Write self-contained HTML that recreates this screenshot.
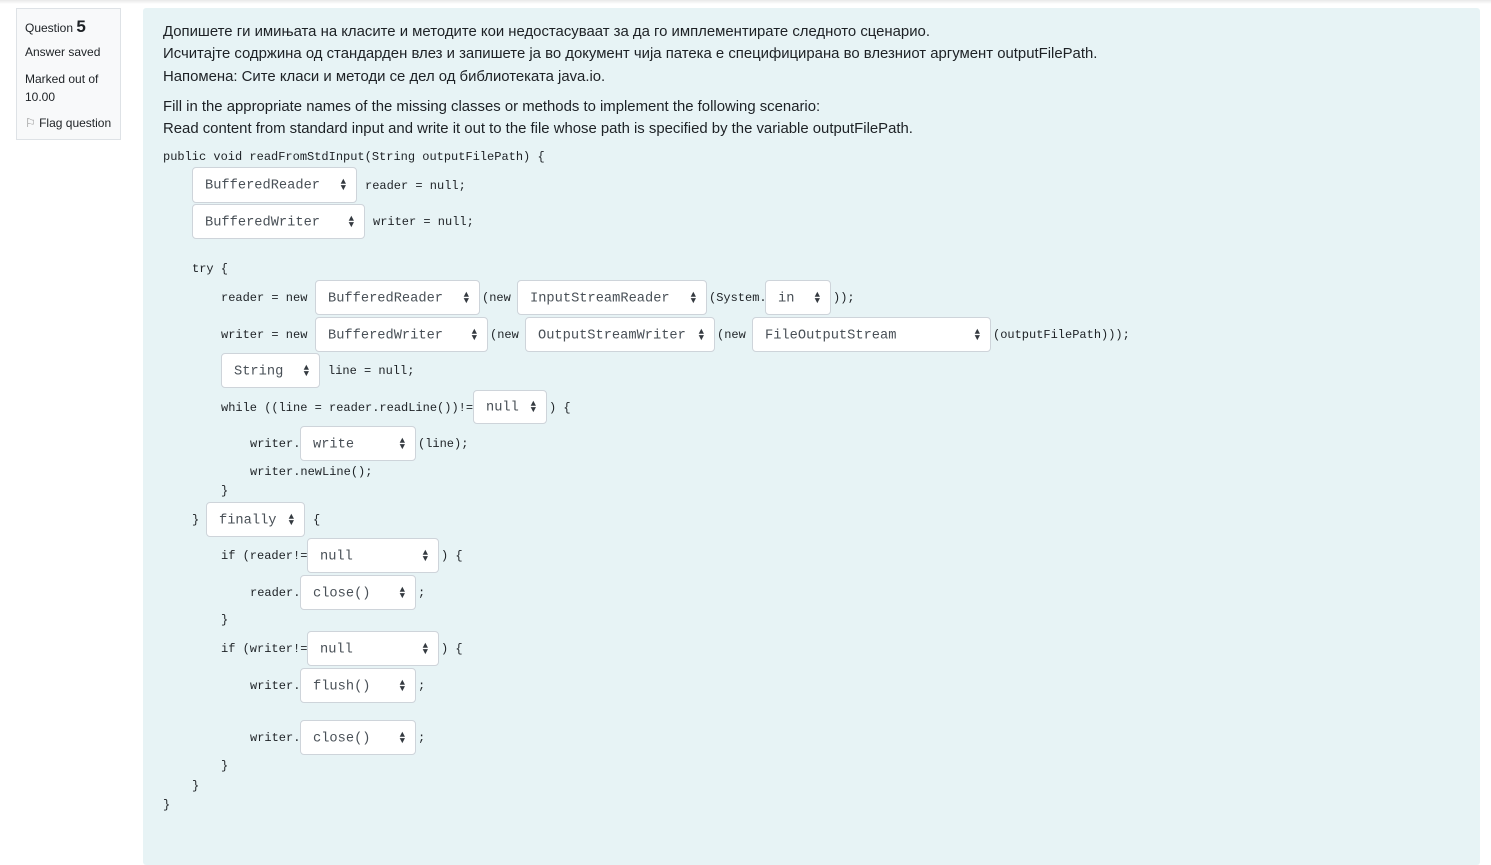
<!DOCTYPE html>
<html><head><meta charset="utf-8"><style>
body{margin:0;width:1491px;height:865px;background:#fff;position:relative;overflow:hidden;font-family:"Liberation Sans",sans-serif;color:#1d2125}
.top{position:absolute;left:0;top:0;width:1491px;height:4px;background:linear-gradient(#e8e8e8,#fff)}
.side{position:absolute;left:16px;top:8px;width:103px;height:130px;background:#f8f9fa;border:1px solid #dee2e6;font-size:12px;color:#1d2125}
.side div{position:absolute;left:8px;white-space:nowrap}
.panel{position:absolute;left:143px;top:8px;width:1337px;height:857px;background:#e7f3f5;border-radius:3px}
.t{position:absolute;left:163px;font-size:14.9px;white-space:nowrap;line-height:18px}
.c{position:absolute;font-family:"Liberation Mono",monospace;font-size:12px;white-space:nowrap;line-height:14px;color:#1d2125}
.s{position:absolute;background:#fff;border:1px solid #ced4da;border-radius:4px;box-sizing:border-box;font-family:"Liberation Mono",monospace;font-size:13.7px;color:#495057}
.s span{position:absolute;left:12px;top:50%;transform:translateY(-45%)}
.s i{position:absolute;right:10px;top:50%;transform:translateY(-50%);font-style:normal;font-size:9px;line-height:6px;color:#343a40;text-align:center}
</style></head><body>
<div class="top"></div>
<div class="side">
<div style="top:8px">Question <b style="font-size:17px">5</b></div>
<div style="top:36px">Answer saved</div>
<div style="top:63px">Marked out of</div>
<div style="top:81px">10.00</div>
<div style="top:107px"><span style="color:#888">⚐</span> Flag question</div>
</div>
<div class="panel"></div>
<div class="t" style="top:23px">Допишете ги имињата на класите и методите кои недостасуваат за да го имплементирате следното сценарио.</div>
<div class="t" style="top:45px">Исчитајте содржина од стандарден влез и запишете ја во документ чија патека е специфицирана во влезниот аргумент outputFilePath.</div>
<div class="t" style="top:68px">Напомена: Сите класи и методи се дел од библиотеката java.io.</div>
<div class="t" style="top:98px">Fill in the appropriate names of the missing classes or methods to implement the following scenario:</div>
<div class="t" style="top:120px">Read content from standard input and write it out to the file whose path is specified by the variable outputFilePath.</div>

<div class="c" style="left:163px;top:150px">public void readFromStdInput(String outputFilePath) {</div>

<div class="s" style="left:192px;top:167px;width:165px;height:36px"><span>BufferedReader</span><i>▲<br>▼</i></div>
<div class="c" style="left:365px;top:179px">reader = null;</div>
<div class="s" style="left:192px;top:204px;width:173px;height:35px"><span>BufferedWriter</span><i>▲<br>▼</i></div>
<div class="c" style="left:373px;top:215px">writer = null;</div>

<div class="c" style="left:192px;top:262px">try {</div>
<div class="c" style="left:221px;top:291px">reader = new</div>
<div class="s" style="left:315px;top:280px;width:165px;height:35px"><span>BufferedReader</span><i>▲<br>▼</i></div>
<div class="c" style="left:482px;top:291px">(new</div>
<div class="s" style="left:517px;top:280px;width:190px;height:35px"><span>InputStreamReader</span><i>▲<br>▼</i></div>
<div class="c" style="left:709px;top:291px">(System.</div>
<div class="s" style="left:765px;top:280px;width:66px;height:35px"><span>in</span><i>▲<br>▼</i></div>
<div class="c" style="left:833px;top:291px">));</div>

<div class="c" style="left:221px;top:328px">writer = new</div>
<div class="s" style="left:315px;top:317px;width:173px;height:35px"><span>BufferedWriter</span><i>▲<br>▼</i></div>
<div class="c" style="left:490px;top:328px">(new</div>
<div class="s" style="left:525px;top:317px;width:190px;height:35px"><span>OutputStreamWriter</span><i>▲<br>▼</i></div>
<div class="c" style="left:717px;top:328px">(new</div>
<div class="s" style="left:752px;top:317px;width:239px;height:35px"><span>FileOutputStream</span><i>▲<br>▼</i></div>
<div class="c" style="left:993px;top:328px">(outputFilePath)));</div>

<div class="s" style="left:221px;top:353px;width:99px;height:35px"><span>String</span><i>▲<br>▼</i></div>
<div class="c" style="left:328px;top:364px">line = null;</div>

<div class="c" style="left:221px;top:401px">while ((line = reader.readLine())!=</div>
<div class="s" style="left:473px;top:390px;width:74px;height:34px"><span>null</span><i>▲<br>▼</i></div>
<div class="c" style="left:549px;top:401px">) {</div>

<div class="c" style="left:250px;top:437px">writer.</div>
<div class="s" style="left:300px;top:426px;width:116px;height:35px"><span>write</span><i>▲<br>▼</i></div>
<div class="c" style="left:418px;top:437px">(line);</div>
<div class="c" style="left:250px;top:465px">writer.newLine();</div>
<div class="c" style="left:221px;top:484px">}</div>

<div class="c" style="left:192px;top:513px">}</div>
<div class="s" style="left:206px;top:502px;width:99px;height:35px"><span>finally</span><i>▲<br>▼</i></div>
<div class="c" style="left:313px;top:513px">{</div>

<div class="c" style="left:221px;top:549px">if (reader!=</div>
<div class="s" style="left:307px;top:538px;width:132px;height:35px"><span>null</span><i>▲<br>▼</i></div>
<div class="c" style="left:441px;top:549px">) {</div>
<div class="c" style="left:250px;top:586px">reader.</div>
<div class="s" style="left:300px;top:575px;width:116px;height:35px"><span>close()</span><i>▲<br>▼</i></div>
<div class="c" style="left:418px;top:586px">;</div>
<div class="c" style="left:221px;top:613px">}</div>

<div class="c" style="left:221px;top:642px">if (writer!=</div>
<div class="s" style="left:307px;top:631px;width:132px;height:35px"><span>null</span><i>▲<br>▼</i></div>
<div class="c" style="left:441px;top:642px">) {</div>
<div class="c" style="left:250px;top:679px">writer.</div>
<div class="s" style="left:300px;top:668px;width:116px;height:35px"><span>flush()</span><i>▲<br>▼</i></div>
<div class="c" style="left:418px;top:679px">;</div>
<div class="c" style="left:250px;top:731px">writer.</div>
<div class="s" style="left:300px;top:720px;width:116px;height:35px"><span>close()</span><i>▲<br>▼</i></div>
<div class="c" style="left:418px;top:731px">;</div>
<div class="c" style="left:221px;top:759px">}</div>
<div class="c" style="left:192px;top:779px">}</div>
<div class="c" style="left:163px;top:798px">}</div>
</body></html>
